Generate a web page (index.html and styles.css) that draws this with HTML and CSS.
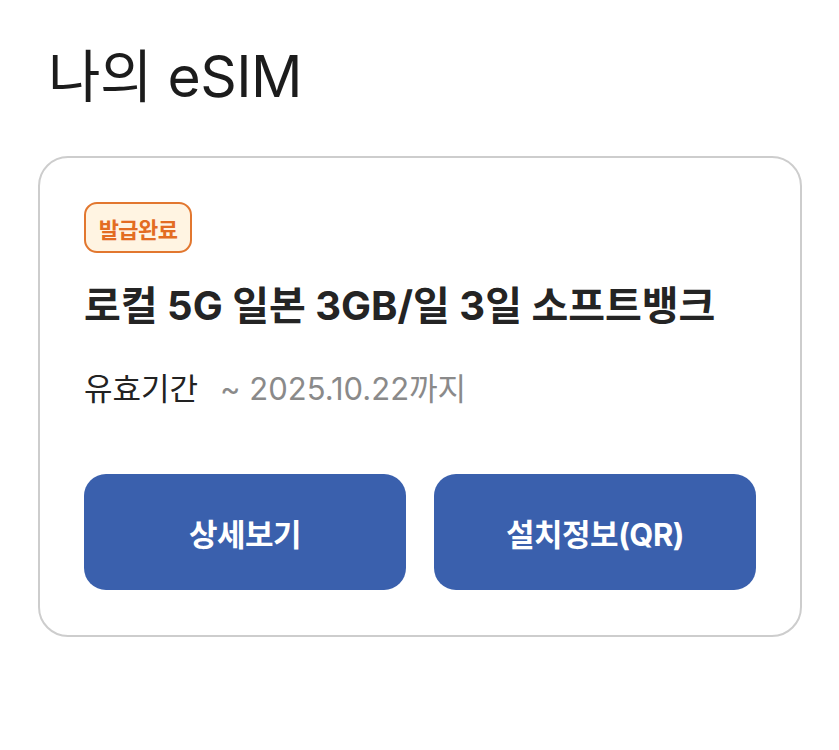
FILE: index.html
```html
<!DOCTYPE html>
<html lang="ko">
<head>
<meta charset="utf-8">
<link rel="stylesheet" href="styles.css">
</head>
<body>
<main class="page">
  <h1 class="page-title">나의 eSIM</h1>
  <section class="esim-card">
    <span class="badge">발급완료</span>
    <h2 class="plan-name">로컬 5G 일본 3GB/일 3일 소프트뱅크</h2>
    <div class="validity">
      <span class="validity-label">유효기간</span>
      <span class="validity-value">~ 2025.10.22까지</span>
    </div>
    <div class="actions">
      <button class="btn">상세보기</button>
      <button class="btn">설치정보(QR)</button>
    </div>
  </section>
</main>
</body>
</html>
```
FILE: styles.css
```css
* { box-sizing: border-box; }
html, body { margin: 0; padding: 0; background: #ffffff; }
body {
  font-family: "Inter", "Noto Sans CJK KR", sans-serif;
  color: #1f1f1f;
}
.page {
  padding: 39px 38px 0 38px;
  width: 839px;
}
.page-title {
  margin: 0 0 41px 10px;
  font-size: 57px;
  font-weight: 400;
  line-height: 76px;
  letter-spacing: -0.5px;
  color: #1c1c1c;
}
.esim-card {
  width: 764px;
  border: 2px solid #cdcdcd;
  border-radius: 30px;
  padding: 44px 44px 45px 44px;
  display: flex;
  flex-direction: column;
  align-items: flex-start;
}
.badge {
  display: inline-flex;
  align-items: center;
  justify-content: center;
  width: 108px;
  height: 51px;
  border: 2px solid #e2772f;
  border-radius: 13px;
  background: #fff4e2;
  color: #e36c22;
  font-size: 22px;
  font-weight: 700;
  letter-spacing: -0.6px;
}
.plan-name {
  margin: 28px 0 0 0;
  font-size: 40px;
  font-weight: 700;
  line-height: 50px;
  letter-spacing: 0;
  color: #242424;
}
.validity {
  margin-top: 38px;
  display: flex;
  align-items: baseline;
  gap: 22px;
  font-size: 31px;
  line-height: 40px;
}
.validity-label { color: #222; letter-spacing: 0; }
.validity-value { color: #8a8a8a; letter-spacing: 0; }
.actions {
  margin-top: 65px;
  width: 100%;
  display: flex;
  gap: 28px;
}
.btn {
  flex: 1;
  height: 116px;
  border: none;
  border-radius: 22px;
  background: #3a60ad;
  color: #ffffff;
  font-family: "Inter", "Noto Sans CJK KR", sans-serif;
  font-size: 31px;
  font-weight: 700;
  letter-spacing: -0.5px;
}
```
